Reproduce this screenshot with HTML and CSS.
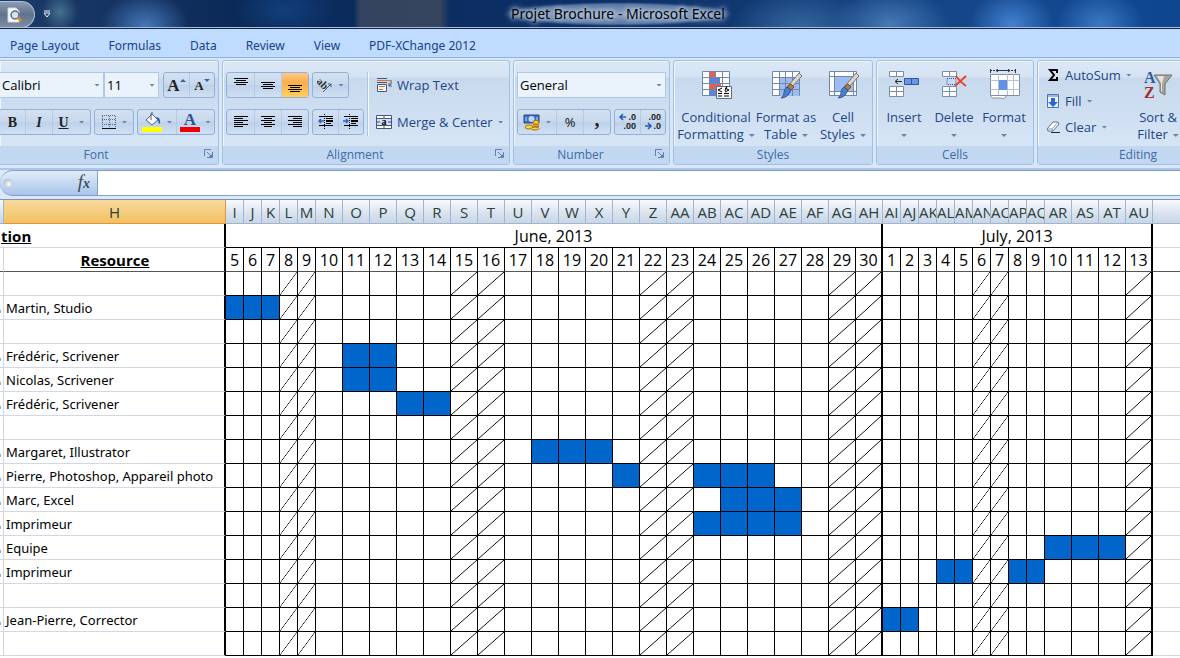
FILE: index.html
```html
<!DOCTYPE html>
<html lang="en">
<head>
<meta charset="utf-8">
<title>Projet Brochure - Microsoft Excel</title>
<link rel="stylesheet" href="styles.css">
</head>
<body>
<header class="titlebar">
  <div class="quick-access">
    <button class="preview-btn" aria-label="Print Preview">
      <svg width="16" height="16" viewBox="0 0 16 16"><path d="M1 1h8l3 3v11H1z" fill="#fff" stroke="#c9d3e0"/><circle cx="8" cy="8" r="4" fill="#cfe3f5" stroke="#56677d" stroke-width="1.5"/><path d="M11 11l3 3" stroke="#e58a1f" stroke-width="3"/></svg>
    </button>
  </div>
  <button class="customize" aria-label="Customize Quick Access Toolbar">
    <svg width="8" height="8" viewBox="0 0 8 8"><path d="M1 1h6" stroke="#e8f0fa"/><path d="M1 3h6L4 7z" fill="#233c66" stroke="#e8f0fa"/></svg>
  </button>
  <h1 class="title">Projet Brochure - Microsoft Excel</h1>
</header>

<nav class="tabs">
  <a href="#layout">Page Layout</a>
  <a href="#formulas">Formulas</a>
  <a href="#data">Data</a>
  <a href="#review">Review</a>
  <a href="#view">View</a>
  <a href="#pdf">PDF-XChange 2012</a>
</nav>

<main>
<div class="ribbon">
  <section class="group g-font">
    <div class="body rows">
      <div class="row">
        <label class="combo c-name"><select aria-label="Font"><option>Calibri</option></select><i class="caret"></i></label>
        <label class="combo c-size"><select aria-label="Font size"><option>11</option></select><i class="caret"></i></label>
        <div class="set push">
          <button class="w26 serif grow" aria-label="Increase font size">A<i class="up"></i></button>
          <button class="w26 serif shrink" aria-label="Decrease font size">A<i class="down"></i></button>
        </div>
      </div>
      <div class="row">
        <div class="set cut">
          <button class="w26 serif bold">B</button>
          <button class="w27 serif italic">I</button>
          <button class="w38 serif under"><span>U</span><i class="caret"></i></button>
        </div>
        <div class="set">
          <button class="w38" aria-label="Borders"><svg width="16" height="16" viewBox="0 0 16 16"><path d="M1 1.500h14M1 5.500h14M1 10.500h14M1.500 2v12M8.500 2v12M14.500 2v12" stroke="#5a6a88" stroke-dasharray="1 1" fill="none"/><path d="M1 14.500h14" stroke="#111"/></svg><i class="caret"></i></button>
        </div>
        <div class="set">
          <button class="w38" aria-label="Fill color"><svg width="20" height="20" viewBox="0 0 20 20"><path d="M10 2l6 6-6 5-6-5z" fill="#f4f7fb" stroke="#51617c"/><path d="M9 8V2q0-2 2-1" fill="none" stroke="#51617c"/><path d="M14 5q5 0 4 7q-2-1-2-4z" fill="#2c5fb3"/><path d="M0 15h20v5H0z" fill="#ff0"/></svg><i class="caret"></i></button>
          <button class="w38" aria-label="Font color"><svg width="20" height="20" viewBox="0 0 20 20"><text x="10" y="13" text-anchor="middle" class="icon-a">A</text><path d="M0 15h20v5H0z" fill="#f00000"/></svg><i class="caret"></i></button>
        </div>
      </div>
    </div>
    <h2>Font<button class="launch" aria-label="Font settings"><svg width="9" height="9" viewBox="0 0 9 9"><use href="#launcher"/></svg></button></h2>
  </section>

  <section class="group g-align">
    <div class="body">
      <div class="rows">
        <div class="row">
          <div class="set">
            <button class="w27" aria-label="Top align"><svg width="16" height="16" viewBox="0 0 16 16"><path d="M1 1.500h14M3 3.500h10M1 5.500h14M3 7.500h10" stroke="#000"/></svg></button>
            <button class="w27" aria-label="Middle align"><svg width="16" height="16" viewBox="0 0 16 16"><path d="M1 5.500h14M3 7.500h10M1 9.500h14M3 11.500h10" stroke="#000"/></svg></button>
            <button class="w27 on" aria-label="Bottom align"><svg width="16" height="16" viewBox="0 0 16 16"><path d="M1 8.500h14M3 10.500h10M1 12.500h14M3 14.500h10" stroke="#000"/></svg></button>
          </div>
          <div class="set">
            <button class="w36" aria-label="Orientation"><svg width="16" height="16" viewBox="0 0 16 16"><text x="0" y="8" class="icon-ab" transform="rotate(45 3 5)">ab</text><path d="M6 15l8-8M14 7h-3M14 7v3" stroke="#4a5568" fill="none"/></svg><i class="caret"></i></button>
          </div>
        </div>
        <div class="row">
          <div class="set">
            <button class="w27" aria-label="Align left"><svg width="16" height="16" viewBox="0 0 16 16"><path d="M1 2.500h14M1 4.500h9M1 6.500h14M1 8.500h9M1 10.500h14M1 12.500h9" stroke="#000"/></svg></button>
            <button class="w27" aria-label="Center"><svg width="16" height="16" viewBox="0 0 16 16"><path d="M1 2.500h14M4 4.500h8M1 6.500h14M4 8.500h8M1 10.500h14M4 12.500h8" stroke="#000"/></svg></button>
            <button class="w27" aria-label="Align right"><svg width="16" height="16" viewBox="0 0 16 16"><path d="M1 2.500h14M6 4.500h9M1 6.500h14M6 8.500h9M1 10.500h14M6 12.500h9" stroke="#000"/></svg></button>
          </div>
          <div class="set">
            <button class="w26" aria-label="Decrease indent"><svg width="16" height="16" viewBox="0 0 16 16"><path d="M1 2.500h14M8 4.500h7M8 9.500h5M1 11.500h14" stroke="#000"/><path d="M8 6h7v2H8z"/><path d="M6.500 0v16" stroke="#000" stroke-dasharray="1 1"/><path d="M6 7H1M3 5L1 7l2 2" stroke="#2a62c4" stroke-width="1.500" fill="none"/></svg></button>
            <button class="w26" aria-label="Increase indent"><svg width="16" height="16" viewBox="0 0 16 16"><path d="M1 2.500h14M8 4.500h7M8 9.500h5M1 11.500h14" stroke="#000"/><path d="M8 6h7v2H8z"/><path d="M6.500 0v16" stroke="#000" stroke-dasharray="1 1"/><path d="M0 7h5M3 5l2 2-2 2" stroke="#2a62c4" stroke-width="1.500" fill="none"/></svg></button>
          </div>
        </div>
      </div>
      <div class="texts">
        <button class="line"><svg width="16" height="16" viewBox="0 0 16 16"><path d="M1 1.500h10M1 5.500h10" stroke="#46587a"/><path d="M1 3.500h13" stroke="#d8702a"/><path d="M1.500 7.500h9v7h-9z" fill="#fff" stroke="#46587a"/><path d="M3 9.500h6M3 12.500h4" stroke="#d8702a"/><path d="M15 3v4l-2 2M13 6v3h3" stroke="#46587a" fill="none"/></svg>Wrap Text</button>
        <button class="line"><svg width="16" height="16" viewBox="0 0 16 16"><path d="M.5 1.500h15v13H.5zM.5 4.500h15M.5 11.500h15M8 1.500v3M8 11.500v3" fill="#fff" stroke="#46587a"/><path d="M1 5h14v6H1z" fill="#cfe0f7"/><path d="M1 8h3M12 8h3" stroke="#2d4d85"/><text x="8" y="11" text-anchor="middle" class="icon-m">a</text></svg>Merge &amp; Center<i class="caret"></i></button>
      </div>
    </div>
    <h2>Alignment<button class="launch" aria-label="Alignment settings"><svg width="9" height="9" viewBox="0 0 9 9"><use href="#launcher"/></svg></button></h2>
  </section>

  <section class="group g-number">
    <div class="body rows">
      <div class="row"><label class="combo c-num"><select aria-label="Number format"><option>General</option></select><i class="caret"></i></label></div>
      <div class="row">
        <div class="set">
          <button class="w38" aria-label="Accounting format"><svg width="18" height="18" viewBox="0 0 18 18"><path d="M1 2h15v8H1z" fill="#3f6fc0" stroke="#1f478d"/><circle cx="8.500" cy="6" r="3" fill="#c4d6f2"/><path d="M3 4v4M14 4v4" stroke="#c4d6f2"/><ellipse cx="13" cy="9" rx="3" ry="1.500" fill="#ffd24a" stroke="#a87308"/><path d="M10 10h6v5h-6z" fill="#e9ab25"/><path d="M10 11.500h6M10 13.500h6" stroke="#a87308"/><ellipse cx="6" cy="14" rx="4" ry="2" fill="#ffd24a" stroke="#a87308"/><ellipse cx="12" cy="15.500" rx="4" ry="1.500" fill="#ffd24a" stroke="#a87308"/></svg><i class="caret"></i></button>
          <button class="w27 pct">%</button>
          <button class="w27 serif comma" aria-label="Comma style">,</button>
        </div>
        <div class="set push">
          <button class="w26" aria-label="Increase decimal"><svg width="18" height="20" viewBox="0 0 18 20"><text x="17" y="8" text-anchor="end" class="icon-d">.0</text><text x="17" y="17" text-anchor="end" class="icon-d">.00</text><path d="M7 5H1M4 2L1 5l3 3" stroke="#2458b8" stroke-width="1.500" fill="none"/></svg></button>
          <button class="w26" aria-label="Decrease decimal"><svg width="18" height="20" viewBox="0 0 18 20"><text x="17" y="8" text-anchor="end" class="icon-d">.00</text><text x="17" y="17" text-anchor="end" class="icon-d">.0</text><path d="M1 14h6M4 11l3 3-3 3" stroke="#2458b8" stroke-width="1.500" fill="none"/></svg></button>
        </div>
      </div>
    </div>
    <h2>Number<button class="launch" aria-label="Number settings"><svg width="9" height="9" viewBox="0 0 9 9"><use href="#launcher"/></svg></button></h2>
  </section>

  <section class="group g-styles">
    <div class="body bigs">
      <button class="big b76"><svg width="32" height="32" viewBox="0 0 32 32"><path d="M2.500 2.500h27v24h-27z" fill="#fff" stroke="#6f86ad"/><path d="M9 3h7v6H9zM9 15h12v6H9z" fill="#f05a46"/><path d="M9 9h11v6H9zM9 21h6v6H9z" fill="#5b83da"/><path d="M2.500 8.500h27M2.500 14.500h27M2.500 20.500h27M9.500 2v25M15.500 2v25M22.500 2v25" stroke="#6f86ad"/><path d="M16.500 17.500h15v12h-15z" fill="#fafafa" stroke="#5d6b80"/><path d="M22 19l-4 2 4 2M18 24.500h4M25 19l4 2-4 2M24 24.500h5M18 27h4M24 27h5M27 17l-2 5" stroke="#000" fill="none"/></svg><span>Conditional<br>Formatting<i class="caret"></i></span></button>
      <button class="big b64"><svg width="32" height="32" viewBox="0 0 32 32"><path d="M2.500 2.500h27v24h-27z" fill="#fff" stroke="#6f86ad"/><path d="M9 9h20v18H9z" fill="#9dbcf2"/><path d="M2.500 8.500h27M2.500 14.500h27M2.500 20.500h27M9.500 2v25M15.500 2v25M22.500 2v25" stroke="#6f86ad"/><use href="#brush"/></svg><span>Format as<br>Table<i class="caret"></i></span></button>
      <button class="big b50"><svg width="32" height="32" viewBox="0 0 32 32"><path d="M2.500 2.500h27v24h-27z" fill="#fff" stroke="#6f86ad"/><path d="M2.500 7.500h27M2.500 22.500h27M7.500 2v25M26.500 2v25" stroke="#6f86ad"/><path d="M8 8h18v14H8z" fill="#9dbcf2"/><use href="#brush"/></svg><span>Cell<br>Styles<i class="caret"></i></span></button>
    </div>
    <h2>Styles</h2>
  </section>

  <section class="group g-cells">
    <div class="body bigs">
      <button class="big b50"><svg width="32" height="32" viewBox="0 0 32 32"><path d="M1.500 2.500h14v5h-14zM1.500 17.500h14v10h-14zM1.500 22.500h14M8.500 2.500v5M8.500 17.500v10" fill="#fff" stroke="#7d8eaa"/><path d="M16.500 9.500h14v6h-14z" fill="#6d94e6" stroke="#32559f"/><path d="M23.500 10v5" stroke="#32559f"/><path d="M14 12.500H8M10 10l-3 2.500 3 2.500" stroke="#222" fill="none"/></svg><span>Insert<br><i class="caret"></i></span></button>
      <button class="big b50"><svg width="32" height="32" viewBox="0 0 32 32"><path d="M4.500 2.500h14v5h-14zM4.500 17.500h14v10h-14zM4.500 22.500h14M11.500 2.500v5M11.500 17.500v10" fill="#fff" stroke="#7d8eaa"/><path d="M9 9.500h9v6H9z" fill="none" stroke="#2b50b0" stroke-dasharray="1 1"/><path d="M17 17L28 7M18 7q4 6 10 10" stroke="#e8442b" stroke-width="2" fill="none"/></svg><span>Delete<br><i class="caret"></i></span></button>
      <button class="big b50"><svg width="32" height="32" viewBox="0 0 32 32"><path d="M2 1.500h26" stroke="#333" stroke-dasharray="2 1"/><path d="M2.500 0v4M27.500 0v4M8 1.500h14M10 0L8 1.500 10 3M20 0l2 1.500L20 3" stroke="#333" fill="none"/><path d="M3 26q0 4 4 3h5q6 2 6-3z" fill="#fff" stroke="#7d8eaa"/><path d="M2.500 5.500h29v21h-29z" fill="#fff" stroke="#7d8eaa"/><path d="M2.500 11.500h29M2.500 20.500h29M10.500 5v21M19.500 5v21M25.500 5v21" stroke="#b3bfd3"/><path d="M11 11h8v10h-8z" fill="#6590e4"/></svg><span>Format<br><i class="caret"></i></span></button>
    </div>
    <h2>Cells</h2>
  </section>

  <section class="group g-edit">
    <div class="body">
      <div class="stack">
        <button class="line"><svg width="14" height="16" viewBox="0 0 14 16"><path d="M11 6V3H4l4 5-4 5h7v-3" fill="none" stroke="#000" stroke-width="2"/></svg>AutoSum<i class="caret"></i></button>
        <button class="line"><svg width="14" height="16" viewBox="0 0 14 16"><path d="M1.500 1.500h11v13h-11z" fill="#e9f1fc" stroke="#5272ad"/><path d="M2 2h10v2H2z" fill="#9bb7e2"/><path d="M5 5h4v4h3l-5 5-5-5h3z" fill="#2c66d4"/></svg>Fill<i class="caret"></i></button>
        <button class="line"><svg width="14" height="16" viewBox="0 0 14 16"><path d="M1 10l6-7h5l1 2-6 7H2z" fill="#fff" stroke="#5e6f8c"/><path d="M1 10h5l6-7M6 10l1 2" fill="none" stroke="#8d9bb3"/><path d="M5 13.500h9" stroke="#222"/></svg>Clear<i class="caret"></i></button>
      </div>
      <button class="big b50"><svg width="32" height="32" viewBox="0 0 32 32"><text x="2" y="14" class="icon-sa">A</text><text x="2" y="29" class="icon-sa icon-sz">Z</text><path d="M12 6h18l-7 9v11l-5-3v-8z" fill="#a5a49f" stroke="#72726f"/><path d="M15 7h7l-2 8v8l-1-1v-8z" fill="#e4e3df"/></svg><span>Sort &amp;<br>Filter<i class="caret"></i></span></button>
    </div>
    <h2>Editing</h2>
  </section>
</div>

<div class="formula">
  <div class="name-end"><i class="knob"></i><button class="fx" aria-label="Insert function"><i>f</i><small>x</small></button></div>
  <input type="text" aria-label="Formula bar">
</div>

<table class="sheet" id="sheet"></table>
</main>

<svg class="defs" width="0" height="0" aria-hidden="true">
  <defs>
    <g id="launcher"><path d="M.5 7V.5H7" fill="none" stroke="#6580ac"/><path d="M3 3l4 4M8.500 3v5.500H3" fill="none" stroke="#6580ac"/><path d="M5 8h3V5z" fill="#6580ac"/></g>
    <g id="brush"><path d="M32 7l-11 12-3-2L29 4z" fill="#d9d6cf" stroke="#77736c"/><path d="M21 15l3 3-3 3-4-3z" fill="#b77a3c" stroke="#75501f"/><path d="M17 18l4 3q-3 8-10 8 4-3 3-6 0-3 3-5z" fill="#4d7fc9" stroke="#2f5797"/></g>
  </defs>
</svg>
<script src="sheet.js"></script>
</body>
</html>
```
FILE: styles.css
```css
* { box-sizing: border-box; }
body {
  margin: 0;
  font: 13px/17px "Open Sans", "Noto Sans", sans-serif;
  color: #000;
  background: #fff;
  overflow: hidden;
}
button, select, input { font: inherit; color: inherit; margin: 0; padding: 0; border: 0; background: none; }
button svg { flex: none; }
.defs { position: absolute; }

/* Title bar */
.titlebar {
  position: relative;
  display: flex;
  align-items: center;
  height: 29px;
  border-bottom: 1px solid #17243f;
  box-shadow: inset 0 -1px #a9bcd8;
  background:
    radial-gradient(ellipse 44px 34px at 145px 26px, #4577b8, transparent),
    radial-gradient(ellipse 18px 20px at 60px 12px, #45708c, transparent),
    radial-gradient(ellipse 50px 26px at 285px 10px, #123f7e, transparent),
    linear-gradient(90deg, transparent 354px, #33435f 360px, #35455f 440px, transparent 450px),
    radial-gradient(ellipse 70px 40px at 800px 28px, #35669f, transparent),
    radial-gradient(ellipse 60px 36px at 890px 24px, #4779b5, transparent),
    radial-gradient(ellipse 42px 34px at 1012px 24px, #4380d0, transparent),
    radial-gradient(ellipse 44px 34px at 1100px 24px, #3b78c4, transparent),
    linear-gradient(90deg, #1d3c6b 0, #0c2a58 20%, #0b2f66 50%, #123a73 65%, #15498e 85%, #0e4690 100%);
}
.quick-access {
  width: 35px;
  height: 27px;
  padding: 5px 0 0 7px;
  border: 1px solid #b3c0d2;
  border-left: 0;
  border-radius: 0 14px 14px 0;
  background: linear-gradient(#8b9bb2, #60728e 50%, #7c8ca5);
}
.preview-btn { display: flex; }
.customize { display: flex; margin-left: 8px; }
.title {
  position: absolute;
  left: 0;
  right: 0;
  width: fit-content;
  margin: 0 auto;
  padding: 0 8px;
  border-radius: 12px;
  translate: 28px;
  font-family: "Noto Sans", sans-serif;
  font-size: 14px;
  font-weight: 400;
  line-height: 24px;
  background: radial-gradient(closest-side, #a9bcd6cc, #8ba4c699 80%, transparent);
  text-shadow: 0 0 4px #c5d4e8, 0 0 6px #c5d4e8, 0 0 8px #b2c4dd;
}

/* Tabs */
.tabs {
  display: flex;
  gap: 29px;
  height: 29px;
  padding: 8px 10px 0;
  font-family: "Noto Sans", sans-serif;
  font-size: 12px;
  background: #bfdbff;
  border-bottom: 1px solid #8db2e3;
}
.tabs a { color: #15428b; text-decoration: none; white-space: nowrap; }

/* Ribbon */
.ribbon {
  display: flex;
  gap: 3px;
  height: 110px;
  padding: 2px 0 3px;
  overflow: hidden;
  background: #d7e7f9;
  color: #1e4687;
}
.group {
  flex: none;
  display: flex;
  flex-direction: column;
  border: 1px solid #a3c0e0;
  border-radius: 3px;
  box-shadow: inset 1px 1px #eef5fd;
  background: linear-gradient(#dce8f6, #d4e2f2 16px, #c8d9ed 17px, #d9e8f8 100%);
}
.g-font { width: 219px; border-left: 0; border-radius: 0 3px 3px 0; }
.g-align { width: 288px; }
.g-number { width: 157px; }
.g-styles { width: 200px; }
.g-cells { width: 158px; }
.g-edit { width: 202px; }
.group h2 {
  position: relative;
  flex: none;
  margin: 0;
  height: 18px;
  font-size: 12px;
  font-weight: 400;
  line-height: 18px;
  text-align: center;
  color: #3e6aaa;
  background: #c1d8f0;
}
.g-font h2 { padding-right: 26px; }
.g-align h2, .g-number h2 { padding-right: 22px; }
.launch { position: absolute; right: 5px; top: 3px; display: flex; }
.body { flex: 1; min-height: 0; display: flex; padding: 11px 3px 0; }
.g-font .body { padding-left: 0; }
.rows { display: flex; flex-direction: column; gap: 11px; }
.row { display: flex; gap: 3px; }
.push { margin-left: auto; }
.set { display: flex; height: 26px; border: 1px solid #93b0d8; border-radius: 3px; background: linear-gradient(#d3e1f2, #c7d8ed 50%, #bdd1ea 51%, #d0e0f3); }
.set.cut { border-left: 0; border-radius: 0 3px 3px 0; }
.set button { display: flex; align-items: center; justify-content: center; gap: 5px; }
.set button + button { border-left: 1px solid #b4c9e5; }
.w26 { width: 25px; }
.w27 { width: 27px; }
.w36 { width: 35px; }
.w38 { width: 38px; }
.set .on { background: linear-gradient(#fbc98a, #fdae4b 40%, #ffd060); }
.serif { font-family: "Liberation Serif", serif; font-weight: 700; color: #222; }
.set .grow, .set .shrink { gap: 0; align-items: center; }
.grow { font-size: 17px; }
.shrink { font-size: 13px; }
.bold, .under { font-size: 14px; }
.italic { font-size: 14px; font-style: italic; }
.under span { text-decoration: underline; margin-right: 5px; }
.pct { color: #111; }
.comma { font-size: 20px; line-height: 16px; padding-bottom: 6px; }
.up, .down { align-self: flex-start; margin-top: 6px; border: 3px solid transparent; }
.up { border-bottom-color: #3a62a8; border-top: 0; }
.down { border-top-color: #3a62a8; border-bottom: 0; }
.caret { display: inline-block; flex: none; width: 6px; height: 3px; background: #6883ae; clip-path: polygon(0 0, 100% 0, 50% 100%); }
.combo { display: flex; align-items: center; height: 26px; padding-right: 3px; border: 1px solid #afc8e8; background: #eaf2fb; }
.combo select { flex: 1; min-width: 0; height: 24px; padding-left: 2px; color: #000; appearance: none; }
.c-name { width: 104px; border-left: 0; margin-right: -3px; }
.c-size { width: 55px; }
.c-num { width: 149px; }
.texts { display: flex; flex-direction: column; gap: 11px; height: 64px; margin-left: 4px; padding-left: 7px; border-left: 1px solid #f4f9ff; box-shadow: -1px 0 #adc6e4; }
.line { display: flex; align-items: center; gap: 5px; height: 26px; white-space: nowrap; }
.bigs { padding: 8px 4px 0; }
.g-cells .bigs { padding: 8px 2px 0; }
.big { display: flex; flex-direction: column; align-items: center; gap: 8px; height: 76px; white-space: nowrap; }
.big span { text-align: center; line-height: 17px; }
.big .caret { margin-left: 5px; vertical-align: middle; }
.b76 { width: 76px; }
.b64 { width: 64px; }
.b50 { width: 50px; }
.g-cells .caret { margin-left: 0; }
.g-edit .body { padding: 0 8px 0; }
.stack { display: flex; flex-direction: column; width: 86px; padding-top: 1px; }
.g-edit .big { padding-top: 8px; height: 84px; }
.stack + .big { width: 52px; }

/* Icon lettering */
.icon-a { font: 700 17px "Liberation Serif", serif; fill: #30538f; }
.icon-ab { font: 700 11px "Liberation Serif", serif; fill: #333; }
.icon-m { font: 700 10px "Liberation Serif", serif; fill: #000; }
.icon-d { font: 700 9px "Liberation Sans", sans-serif; fill: #222; }
.icon-sa { font: 700 16px "Liberation Serif", serif; fill: #34599e; }
.icon-sz { fill: #a32f31; }

/* Formula bar */
.formula { display: flex; height: 31px; padding-bottom: 3px; border-top: 2px solid #abc6ea; background: #dce8f7; }
.name-end {
  display: flex;
  align-items: center;
  justify-content: space-between;
  width: 98px;
  padding: 0 7px 0 4px;
  border: 1px solid #7f9fcb;
  border-left: 0;
  border-radius: 14px 0 0 14px;
  background: linear-gradient(#e4edf9, #c4d8f2 50%, #a9c5ea);
}
.knob { width: 8px; height: 8px; border-radius: 50%; background: radial-gradient(circle at 60% 65%, #fff, #96a5ba); }
.fx { font: 400 19px/20px "Liberation Serif", serif; color: #444c58; }
.fx small { font-size: 14px; font-style: italic; font-weight: 700; }
.formula input { flex: 1; min-width: 0; background: #fff; border: solid #7f9fcb; border-width: 1px 0; }

/* Worksheet */
.sheet { width: 100%; table-layout: fixed; border-collapse: separate; border-spacing: 0; border-top: 1px solid #7f92b5; }
.sheet th, .sheet td { height: 24px; padding: 0; border: 0 solid #d0d7e5; border-width: 0 0 1px; white-space: nowrap; overflow: hidden; }
.col-edge { width: 4px; }
.col-text { width: 222px; }
.col-slim { width: 18px; }
.col-wide { width: 27px; }
.sheet .letters th { border-width: 0 1px 1px 0; border-color: #9eb6ce; font-size: 15px; line-height: 22px; font-weight: 400; color: #27413e; background: linear-gradient(#f8fafd, #dde5f0 50%, #c9d5e6); }
.sheet .letters .picked { border-color: #e8923a; background: linear-gradient(#f9d99f, #f1c15f); }
.sheet .letters th:last-child { border-right-width: 0; }
.sheet .edge { border-right-width: 1px; }
.sheet .mark { background: linear-gradient(#7fb9d6, #7fb9d6) 0 14px / 1px 3px no-repeat; }
.sheet .label { padding: 1px 0 0 2px; border-right: 2px solid #000; text-align: left; font-family: "Noto Sans", sans-serif; font-weight: 400; line-height: 22px; }
.sheet .heading { padding-top: 0; font-family: "Open Sans", sans-serif; font-size: 15px; font-weight: 700; text-decoration: underline; text-align: center; }
.sheet .clip { padding-left: 1px; text-align: left; }
.sheet .month, .sheet .day { font-size: 16px; font-weight: 400; line-height: 22px; text-align: center; border-color: #000; }
.sheet .day, .sheet .cell { border-color: #000; border-right-width: 1px; }
.sheet .days > * { border-bottom-color: #555; }
.sheet .end { border-right: 2px solid #000; }
.sheet .off { background: linear-gradient(to bottom right, transparent 48%, #000 50%, transparent 52%); }
.sheet .busy { background: #0066cc; }
```
FILE: sheet.js
```js
const range = (a, b) => Array.from({ length: b - a + 1 }, (_, i) => a + i);
const days = [
  ...range(5, 30).map(d => ({ d, key: 'J' + d, slim: d < 10, off: [8, 9, 15, 16, 22, 23, 29, 30].includes(d), end: d === 30 })),
  ...range(1, 13).map(d => ({ d, key: 'L' + d, slim: d < 10, off: [6, 7, 13].includes(d), end: d === 13 }))
];
const letters = 'I J K L M N O P Q R S T U V W X Y Z AA AB AC AD AE AF AG AH AI AJ AK AL AM AN AO AP AQ AR AS AT AU'.split(' ');
const tasks = [
  ['', ''],
  ['Martin, Studio', 'J5 J6 J7'],
  ['', ''],
  ['Frédéric, Scrivener', 'J11 J12'],
  ['Nicolas, Scrivener', 'J11 J12'],
  ['Frédéric, Scrivener', 'J13 J14'],
  ['', ''],
  ['Margaret, Illustrator', 'J18 J19 J20'],
  ['Pierre, Photoshop, Appareil photo', 'J21 J24 J25 J26'],
  ['Marc, Excel', 'J25 J26 J27'],
  ['Imprimeur', 'J24 J25 J26 J27'],
  ['Equipe', 'L10 L11 L12'],
  ['Imprimeur', 'L4 L5 L8 L9'],
  ['', ''],
  ['Jean-Pierre, Corrector', 'L1 L2'],
  ['', '']
];

const cols = '<colgroup><col class="col-edge"><col class="col-text">' +
  days.map(x => `<col class="${x.slim ? 'col-slim' : 'col-wide'}">`).join('') + '<col></colgroup>';
const head = '<thead><tr class="letters"><th></th><th class="picked">H</th>' +
  letters.map(l => `<th>${l}</th>`).join('') + '<th></th></tr></thead>';
const months = '<tr><th colspan="2" class="label heading clip">tion</th>' +
  '<th colspan="26" class="month end">June, 2013</th><th colspan="13" class="month end">July, 2013</th><td></td></tr>';
const dayRow = '<tr class="days"><td class="edge"></td><th class="label heading">Resource</th>' +
  days.map(x => `<th class="day${x.end ? ' end' : ''}">${x.d}</th>`).join('') + '<td></td></tr>';
const body = tasks.map(([who, when]) => {
  const busy = when.split(' ');
  return `<tr><td class="edge${who ? ' mark' : ''}"></td><th class="label">${who}</th>` + days.map(x =>
    `<td class="cell${x.off ? ' off' : ''}${x.end ? ' end' : ''}${busy.includes(x.key) ? ' busy' : ''}"></td>`
  ).join('') + '<td></td></tr>';
}).join('');
document.getElementById('sheet').innerHTML = cols + head + '<tbody>' + months + dayRow + body + '</tbody>';
```
